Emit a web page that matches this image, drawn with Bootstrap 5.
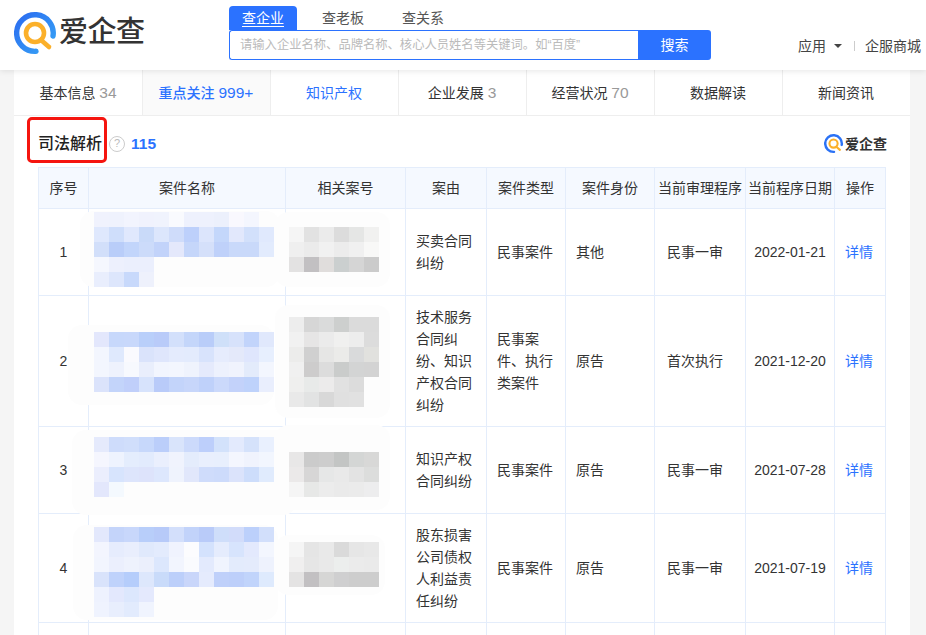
<!DOCTYPE html>
<html lang="zh">
<head>
<meta charset="utf-8">
<title>司法解析</title>
<link href="https://cdn.jsdelivr.net/npm/bootstrap@5.3.0/dist/css/bootstrap.min.css" rel="stylesheet">
<style>
html,body{height:635px;overflow:hidden}
body{background:#f5f5f5;font-family:"Liberation Sans","Noto Sans CJK SC",sans-serif;font-size:14px;color:#333;line-height:22px}
.site-head{height:70px;background:#fff;box-shadow:0 1px 6px rgba(0,0,0,.1);position:relative;z-index:2;padding-left:14px}
.brand-box{width:215px;padding-top:12px;gap:1px}
.brand-word{font-size:29px;line-height:40px;font-weight:500;color:#333;letter-spacing:-.5px}
.search-area{width:482px;padding-top:6px}
.search-tab{height:24px;line-height:24px;color:#555;font-size:14px;text-align:center;white-space:nowrap}
.search-tab.on{width:68px;background:#2b72ff;color:#fff;border-radius:4px 4px 0 0}
.search-tab.on span{text-decoration:underline;text-underline-offset:3px}
.tab-b{margin-left:25px;width:42px}
.tab-c{margin-left:38px;width:42px}
.search-row{height:30px}
.search-input{width:409px;height:30px;border:1px solid #2b72ff;border-right:0;border-radius:3px 0 0 3px;padding:0 10px;color:#bbb;font-size:12.3px;line-height:28px;white-space:nowrap;overflow:hidden}
.search-btn{width:73px;height:30px;background:#2b72ff;color:#fff;border-radius:0 3px 3px 0;text-align:center;line-height:30px}
.head-links{padding:35px 0 0 87px;white-space:nowrap;color:#444;height:57px}
.caret-down{width:0;height:0;border:4px solid transparent;border-top-color:#444;border-bottom:0;margin:0 12px 0 8px}
.head-sep{width:1px;height:10px;background:#ccc;margin-right:10px}
.main-panel{margin-left:14px;width:896px;height:565px;background:#fff}
.tab-strip{height:46px;border-bottom:1px solid #eee}
.tab-cell{width:128px;height:45px;line-height:46px;text-align:center;border-left:1px solid #eee;padding-right:1px;color:#333;white-space:nowrap}
.tab-cell:first-child{border-left:0;padding-right:0}
.tab-cell em{font-style:normal;color:#999;font-size:15.5px}
.tab-cell.cur{background:#fafafa;color:#2b72ff;font-weight:500}
.tab-cell.cur em{color:#2b72ff;font-weight:400}
.tab-cell.blue{color:#2b72ff}
.title-row{height:51px;padding:4px 24px 0;position:relative}
.title-text{font-size:16px;font-weight:500;color:#222;margin-right:7px}
.help-dot{width:16px;height:16px;border:1.5px solid #ccc;border-radius:50%;color:#bbb;font-size:11px;line-height:13px;text-align:center;margin-right:6px}
.title-count{color:#2b72ff;font-weight:700;font-size:15.5px}
.mini-logo{gap:1px;margin-right:-1px}
.mini-word{font-size:14px;font-weight:700;color:#333}
.red-frame{position:absolute;left:13px;top:1px;width:80px;height:46px;border:3.5px solid #f5150f;border-radius:5px}
.case-wrap{margin:0 24px;position:relative}
.case-table{table-layout:fixed;width:847px;border-collapse:collapse;color:#333}
.case-table th,.case-table td{border:1px solid #e4edfb;padding:10px;vertical-align:middle;line-height:22px;font-weight:400;font-size:14px}
.case-table th{background:#f5f9ff;text-align:center;padding:9px 0;height:41px}
.case-table td.mid{text-align:center;padding:10px 4px}
.case-table td.act{padding:10px 6px 10px 4px}
.case-table td.proc{padding-left:12px;padding-right:4px}
.case-table td.dt{padding:10px 0;text-align:center}
.case-table td a{color:#2b72ff;text-decoration:none}
.h1{height:87px}.h2{height:131px}.h3{height:87px}.h4{height:109px}.h5{height:60px}
.redact{position:absolute;left:0;top:0;width:848px;height:468px;pointer-events:none}
</style>
</head>
<body>
<header class="site-head d-flex">
  <div class="brand-box d-flex align-items-start">
    <svg width="44" height="44" viewBox="14 12 44 44" aria-hidden="true">
      <defs><linearGradient id="g1" x1="0" y1="0" x2="1" y2="1"><stop offset="0" stop-color="#2b6cf0"/><stop offset="1" stop-color="#37a4f6"/></linearGradient></defs>
      <path d="M53 36A18.3 18.3 0 1 0 36 51.3" fill="none" stroke="url(#g1)" stroke-width="5.4" stroke-linecap="round"/>
      <circle cx="35" cy="33" r="9" fill="none" stroke="#fbb02a" stroke-width="4.6"/>
      <path d="M41 40L49 47" stroke="#fbb02a" stroke-width="4.6" stroke-linecap="round"/>
    </svg>
    <span class="brand-word">爱企查</span>
  </div>
  <div class="search-area">
    <div class="d-flex">
      <div class="search-tab on"><span>查企业</span></div>
      <div class="search-tab tab-b">查老板</div>
      <div class="search-tab tab-c">查关系</div>
    </div>
    <div class="search-row d-flex">
      <div class="search-input">请输入企业名称、品牌名称、核心人员姓名等关键词。如“百度”</div>
      <div class="search-btn">搜索</div>
    </div>
  </div>
  <div class="head-links d-flex align-items-center">
    <span>应用</span><span class="caret-down"></span><span class="head-sep"></span><span>企服商城</span>
  </div>
</header>
<main class="main-panel">
  <nav class="tab-strip d-flex">
    <div class="tab-cell">基本信息 <em>34</em></div>
    <div class="tab-cell cur">重点关注 <em>999+</em></div>
    <div class="tab-cell blue">知识产权</div>
    <div class="tab-cell">企业发展 <em>3</em></div>
    <div class="tab-cell">经营状况 <em>70</em></div>
    <div class="tab-cell">数据解读</div>
    <div class="tab-cell">新闻资讯</div>
  </nav>
  <div class="title-row d-flex align-items-center">
    <span class="title-text">司法解析</span>
    <span class="help-dot">?</span>
    <span class="title-count">115</span>
    <span class="mini-logo ms-auto d-flex align-items-center">
      <svg width="20" height="20" viewBox="14 12 44 44" aria-hidden="true">
        <path d="M53 36A18.3 18.3 0 1 0 36 51.3" fill="none" stroke="#2b72f5" stroke-width="5.4" stroke-linecap="round"/>
        <circle cx="35" cy="33" r="9" fill="none" stroke="#fbb02a" stroke-width="4.6"/>
        <path d="M41 40L49 47" stroke="#fbb02a" stroke-width="4.6" stroke-linecap="round"/>
      </svg>
      <span class="mini-word">爱企查</span>
    </span>
    <div class="red-frame"></div>
  </div>
  <div class="case-wrap">
    <table class="case-table">
      <colgroup><col style="width:50px"><col style="width:197px"><col style="width:120px"><col style="width:81px"><col style="width:79px"><col style="width:89px"><col style="width:91px"><col style="width:89px"><col style="width:51px"></colgroup>
      <thead><tr><th>序号</th><th>案件名称</th><th>相关案号</th><th>案由</th><th>案件类型</th><th>案件身份</th><th>当前审理程序</th><th>当前程序日期</th><th>操作</th></tr></thead>
      <tbody>
        <tr class="h1"><td class="mid">1</td><td></td><td></td><td>买卖合同纠纷</td><td>民事案件</td><td>其他</td><td class="proc">民事一审</td><td class="dt">2022-01-21</td><td class="mid act"><a href="#">详情</a></td></tr>
        <tr class="h2"><td class="mid">2</td><td></td><td></td><td>技术服务合同纠纷、知识产权合同纠纷</td><td>民事案件、执行类案件</td><td>原告</td><td class="proc">首次执行</td><td class="dt">2021-12-20</td><td class="mid act"><a href="#">详情</a></td></tr>
        <tr class="h3"><td class="mid">3</td><td></td><td></td><td>知识产权合同纠纷</td><td>民事案件</td><td>原告</td><td class="proc">民事一审</td><td class="dt">2021-07-28</td><td class="mid act"><a href="#">详情</a></td></tr>
        <tr class="h4"><td class="mid">4</td><td></td><td></td><td>股东损害公司债权人利益责任纠纷</td><td>民事案件</td><td>原告</td><td class="proc">民事一审</td><td class="dt">2021-07-19</td><td class="mid act"><a href="#">详情</a></td></tr>
        <tr class="h5"><td></td><td></td><td></td><td></td><td></td><td></td><td></td><td></td><td></td></tr>
      </tbody>
    </table>
    <svg class="redact" id="redact" viewBox="38 167 848 468" aria-hidden="true"></svg>
  </div>
</main>
<script>
var blobs=[[80,211,200,76],[275,212,115,75],[68,325,206,80],[275,305,115,113],[72,430,225,85],[275,425,115,85],[73,525,205,95],[275,535,110,60]];
var mos=[
[94,212,"f0f2fd,eff2fd,f2f4fe,f0f2fd,f0f3fd,f9fafe,eef1fd,eef1fd,ecf0fc,f9f8fe,f4f6fe|dfe8fd,cfdefb,e0e8fd,c9daf9,dce6fc,cfdcfa,bdd0fb,dce5fc,c4d7fb,e2e8fc,d2e0fb,e0e9fd|d2dffa,b9cdf9,c2d5fb,ccdbfa,c2d3fa,e4e8fb,c5d6fa,d5e0fa,bfd1fa,c9d9fa,c9d9fa,e2ebfd|f5f7fe,edf0fd,ebeffd,ebeffd|e9eefd,dde6fc,c8d9fb,eef1fc"],
[289,227,"f5f5f5,e2e2e2,ebebeb,dcdcdc,e5e6e5,f1f1f0|efefef,ebebeb,f1f1f1,ececec,f0f0f0,f8f8f7|e3e2e2,c2c0c2,e0dddc,cbcfcf,d5d5d5,cbcbcb"],
[94,332,"e3e7fc,c7d8fb,c8d8fb,b9cffa,b9cbf9,d3e0fb,c4d6fa,b9cdf9,cfe0f9,d7e2fb,c2d4fb,e0e8fc|f3f6fe,dfe9fd,fafafe,dae3fb,dfe6fc,e4ebfd,e3ebfd,d8e3fc,e6ecfd,e4e9fa,dfe6fd,e7effe|f3f6fe,eef2fd,f7f9fe,e9eefc,f2f5fe,f3f6fe,eff3fd,e5eafc,edf1fd,f0f3fd,e3ebfb,f3f6fe|dbe3fb,c3d4fa,c0cffa,d7e3fc,b9cbf9,c3d4fa,c7d6fa,bfd1fa,cbd9fb,c3d2fa,bed2fb,e9eefd"],
[289,317,"ededed,d6d6d6,dadbdb,cdcfce,dbdbdb,dbdbdb|f1f1f1,e6e5e5,ebebeb,f0f0ef,ededed,dcdcdc|ececeb,d0d0d0,e6e6e5,ebebe9,d9dadb,e1e1de|f0f0f0,cdcccc,dcdcdc,cacccb,d3d4d4,d3d3d3|efefee,e8eae9,ecebeb,e1e1e1,dcdcdc|e9e9e9,e2e3e3,d8d8d8,e0e0e0,e1e1e1"],
[94,437,"e5eafc,cedcfb,d0defb,c7d8fb,bbcefa,d9e4fb,ccdafb,bdcffb,d3e2fb,e3eafd,d5e2fb,e9f0fe|f5f6fe,eef3fe,e4edfd,e2ebfd,eaeffd,f0f3fd,e4ecfc,e9effd,e8effd,f4f6fe,f0f3fd,f2f6fe|ebeefd,d7e4fd,dde5fc,dde3fb,dde7fd,eff3fd,e1e7fb,cfdcfb,cddbfb,dbe3fb,cdddfb,e0ebfd|e3e7fc,f4f9fe"],
[289,452,"e8e7e7,cbcbcb,cdcdcd,c3c5c4,d4d6d5,d8d8d7|ebe9e9,d7d6d6,e6e7e7,e9e9e9,e3e3e3,dcdddc|f5f5f5,e7e8e7,ececec,eaeaea,ebebeb,ededee"],
[94,527,"e3e8fc,c4d4fa,c8d7fb,b8cefa,b7caf9,d3dffb,c2d3fa,b9cbf9,cfdefa,d2dcfa,bcd0fb,d2dffb|f3f5fe,e6ecfd,e9eefd,e0e9fc,e3ebfd,f0f3fe,fcfcfe,d4e2fd,e5ecfd,d7e4fd,e3e9fd,f3f6fe|f2f5fe,ebeffd,eef2fd,ebeffc,dce7fd,f2f5fe,fafbfe,e3eafd,f0f4fe,e3ebfc,e4ebfc,eef2fd|d9e3fb,bfd2fb,b5cdfb,dde7fc,c9dbfa,bccffa,c9d6fa,e5ebfd,bfd0fa,bdcffa,c1d4fb,deeafd|eef2fe,e3e8fd,dce7fd,e4e9fd|eff3fe,e8eefd,e2ebfd,f0f4fe"],
[289,542,"f5f5f5,e5e5e5,e9e9e9,dadada,e6e6e6,e8e8e8|f0efef,e6e6e6,e9e9e9,eceeed,ebebeb,eaeaea|e4e3e3,c2c0c2,d6d6d5,cfcfd0,cdcdcd,cdcdcd"]
];
var s="";
blobs.forEach(function(b){s+='<rect x="'+b[0]+'" y="'+b[1]+'" width="'+b[2]+'" height="'+b[3]+'" rx="14" fill="#fdfdfd"/>';});
mos.forEach(function(m){m[2].split("|").forEach(function(row,r){row.split(",").forEach(function(c,i){s+='<rect x="'+(m[0]+i*15)+'" y="'+(m[1]+r*15)+'" width="15" height="15" fill="#'+c+'"/>';});});});
document.getElementById("redact").innerHTML=s;
</script>
<script src="https://cdn.jsdelivr.net/npm/bootstrap@5.3.0/dist/js/bootstrap.bundle.min.js"></script>
</body>
</html>
